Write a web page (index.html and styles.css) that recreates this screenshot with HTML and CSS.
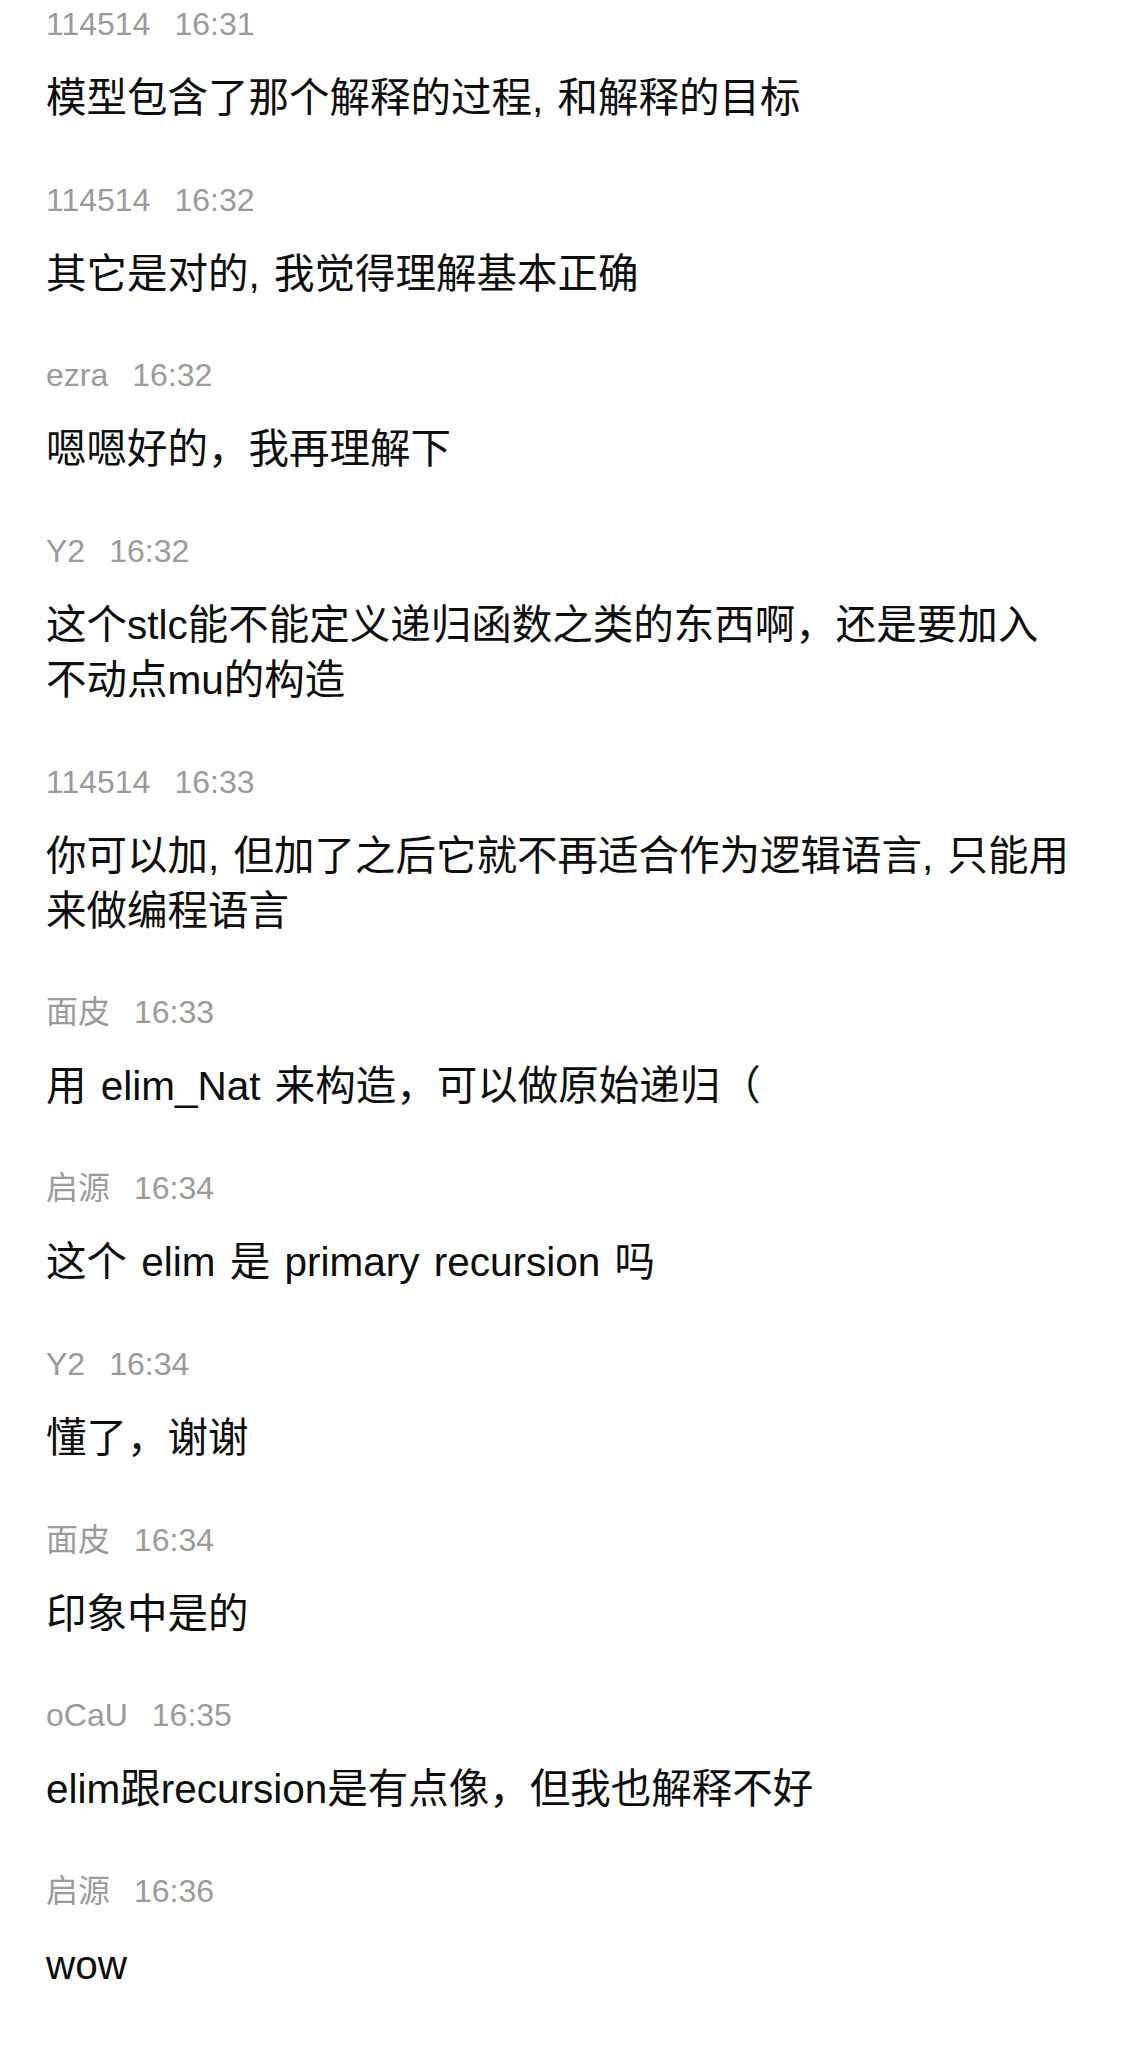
FILE: index.html
```html
<!DOCTYPE html>
<html lang="zh-CN">
<head>
<meta charset="utf-8">
<title>Chat</title>
<link rel="stylesheet" href="styles.css">
</head>
<body>
<div class="chat">
  <div class="msg"><div class="meta"><span class="name">114514</span><span class="time">16:31</span></div><div class="text">模型包含了那个解释的过程, 和解释的目标</div></div>
  <div class="msg"><div class="meta"><span class="name">114514</span><span class="time">16:32</span></div><div class="text">其它是对的, 我觉得理解基本正确</div></div>
  <div class="msg"><div class="meta"><span class="name">ezra</span><span class="time">16:32</span></div><div class="text">嗯嗯好的，我再理解下</div></div>
  <div class="msg"><div class="meta"><span class="name">Y2</span><span class="time">16:32</span></div><div class="text">这个stlc能不能定义递归函数之类的东西啊，还是要加入不动点mu的构造</div></div>
  <div class="msg"><div class="meta"><span class="name">114514</span><span class="time">16:33</span></div><div class="text">你可以加, 但加了之后它就不再适合作为逻辑语言, 只能用来做编程语言</div></div>
  <div class="msg"><div class="meta"><span class="name">面皮</span><span class="time">16:33</span></div><div class="text">用 elim_Nat 来构造，可以做原始递归（</div></div>
  <div class="msg"><div class="meta"><span class="name">启源</span><span class="time">16:34</span></div><div class="text">这个 elim 是 primary recursion 吗</div></div>
  <div class="msg"><div class="meta"><span class="name">Y2</span><span class="time">16:34</span></div><div class="text">懂了，谢谢</div></div>
  <div class="msg"><div class="meta"><span class="name">面皮</span><span class="time">16:34</span></div><div class="text">印象中是的</div></div>
  <div class="msg"><div class="meta"><span class="name">oCaU</span><span class="time">16:35</span></div><div class="text">elim跟recursion是有点像，但我也解释不好</div></div>
  <div class="msg"><div class="meta"><span class="name">启源</span><span class="time">16:36</span></div><div class="text">wow</div></div>
</div>
</body>
</html>
```
FILE: styles.css
```css
html, body {
  margin: 0;
  padding: 0;
  background: #ffffff;
}
body {
  font-family: "Liberation Sans", "Noto Sans CJK SC", sans-serif;
}
.chat {
  width: 1025px;
  padding: 4px 0 0 46px;
  display: flex;
  flex-direction: column;
  gap: 53.7px;
}
.msg {
  display: flex;
  flex-direction: column;
  gap: 27px;
}
.meta {
  display: flex;
  gap: 24px;
  height: 40px;
  line-height: 40px;
  font-size: 32px;
  color: #9a9a9a;
}
.text {
  font-size: 40.5px;
  line-height: 55px;
  color: #0d0d0d;
  word-spacing: 3px;
}
```
